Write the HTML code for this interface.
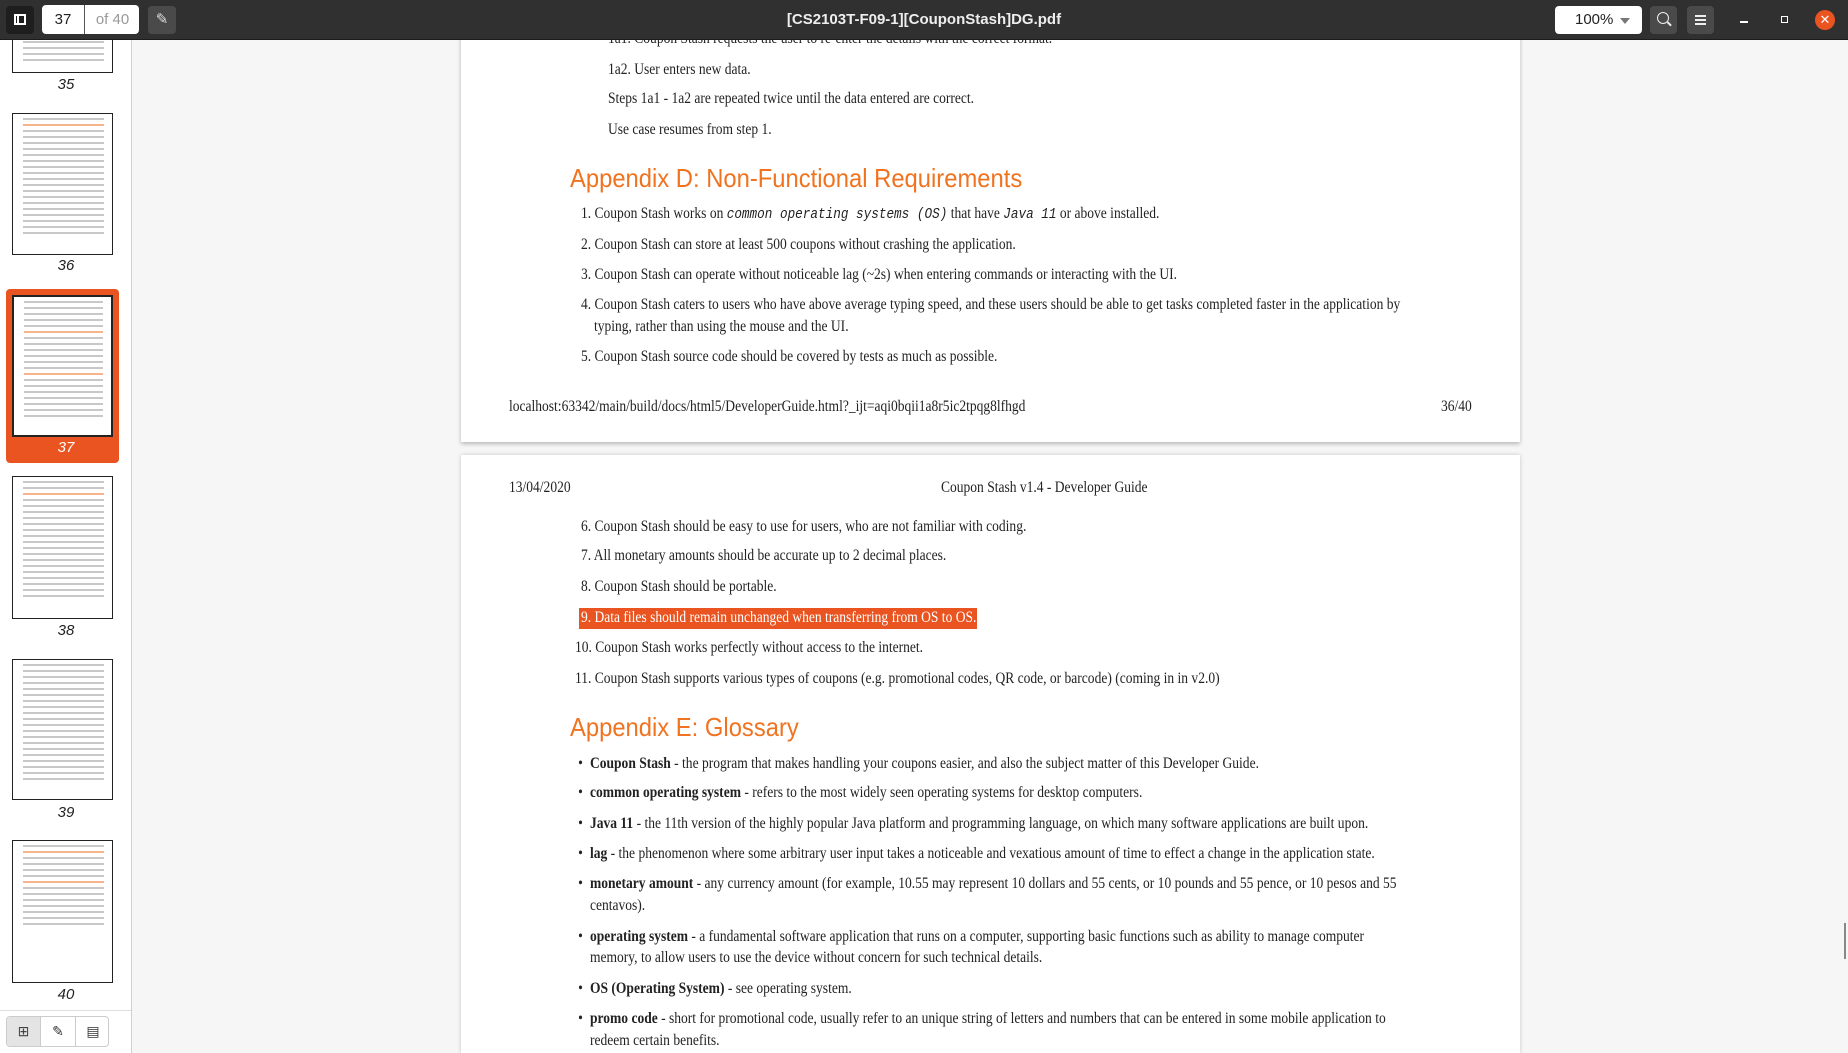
<!DOCTYPE html>
<html><head><meta charset="utf-8"><style>
*{margin:0;padding:0;box-sizing:border-box}
html{width:1848px;height:1053px;overflow:hidden}
body{width:1848px;height:1053px;overflow:hidden;background:#f6f6f6;font-family:"Liberation Sans",sans-serif;position:relative}
.top{position:absolute;left:0;top:0;width:1848px;height:40px;background:#303030;border-bottom:1px solid #1c1c1c;z-index:10}
.btn{position:absolute;top:6px;height:28px;background:#4a4a4a;border-radius:4px}
.side{position:absolute;left:0;top:40px;width:132px;height:1013px;background:#fff;border-right:1px solid #d0d0d0}
.th{position:absolute;left:12px;width:101px;border:1px solid #222;background:#fff;overflow:hidden}
.th i{display:block;height:2px;margin:4px 8px 0 10px;background:#c8c8c8}
.lab{position:absolute;width:132px;text-align:center;font-style:italic;font-size:15px;color:#222}
.page{position:absolute;left:461px;width:1059px;background:#fff;box-shadow:0 2px 4px rgba(0,0,0,.25);overflow:hidden}
.l{position:absolute;white-space:nowrap;font-family:"Liberation Serif",serif;font-size:16px;line-height:20px;color:#222;transform:scaleX(.845);transform-origin:0 50%}
.h{position:absolute;white-space:nowrap;font-family:"Liberation Sans",sans-serif;font-size:26px;line-height:30px;color:#f07320;transform:scaleX(.915);transform-origin:0 50%}
.m{font-family:"Liberation Mono",monospace;font-style:italic;font-size:15px}
.b::before{content:"•";position:absolute;left:-14px}
</style></head><body>
<div class="top">
 <div class="btn" style="left:6px;width:28px;background:#1e1e1e"><div style="position:absolute;left:8px;top:8px;width:12px;height:11px;border:2px solid #fff"><div style="position:absolute;left:1px;top:0;width:2px;height:7px;background:#fff"></div></div></div>
 <div style="position:absolute;left:42px;top:5px;width:97px;height:29px;background:#fff;border-radius:4px"></div>
 <div style="position:absolute;left:84px;top:5px;width:1px;height:29px;background:#555"></div>
 <div style="position:absolute;left:42px;top:11px;width:42px;text-align:center;font-size:15px;color:#222">37</div>
 <div style="position:absolute;left:86px;top:11px;width:53px;text-align:center;font-size:15px;color:#999">of 40</div>
 <div class="btn" style="left:148px;width:28px;color:#ddd;font-size:15px;text-align:center;line-height:28px">✎</div>
 <div style="position:absolute;left:0;width:1848px;top:11px;text-align:center;font-size:15px;font-weight:bold;color:#eee">[CS2103T-F09-1][CouponStash]DG.pdf</div>
 <div style="position:absolute;left:1555px;top:6px;width:87px;height:28px;background:#fff;border-radius:4px;font-size:15px;line-height:28px;padding-left:20px;color:#222">100%</div>
 <div style="position:absolute;left:1620px;top:18px;border-left:5px solid transparent;border-right:5px solid transparent;border-top:6px solid #777"></div>
 <div class="btn" style="left:1650px;width:27px"><div style="position:absolute;left:7px;top:6px;width:12px;height:12px;border:1.5px solid #eee;border-radius:50%"></div><div style="position:absolute;left:17px;top:17px;width:5px;height:1.5px;background:#eee;transform:rotate(45deg)"></div></div>
 <div class="btn" style="left:1687px;width:27px"><div style="position:absolute;left:8px;top:9px;width:11px;height:1.5px;background:#eee;box-shadow:0 4px #eee,0 8px #eee"></div></div>
 <div style="position:absolute;left:1740px;top:21px;width:8px;height:1.5px;background:#fff"></div>
 <div style="position:absolute;left:1781px;top:16px;width:7px;height:7px;border:1.5px solid #fff"></div>
 <div style="position:absolute;left:1815px;top:10px;width:20px;height:20px;border-radius:50%;background:#e95420;color:#fff;font-size:13px;text-align:center;line-height:20px">✕</div>
</div>

<div class="side">
 <div class="th" style="top:-10px;height:43px"><i></i><i></i><i></i><i></i><i></i></div>
 <div class="lab" style="top:36px">35</div>
 <div class="th" style="top:73px;height:142px"><i></i><i style="background:#f5b48c"></i><i></i><i></i><i></i><i></i><i></i><i></i><i></i><i></i><i></i><i></i><i></i><i></i><i></i><i></i><i></i><i></i><i></i><i></i></div>
 <div class="lab" style="top:217px">36</div>
 <div style="position:absolute;left:6px;top:249px;width:113px;height:174px;background:#e95420;border-radius:4px"></div>
 <div class="th" style="top:255px;height:142px;border-width:2px"><i></i><i></i><i></i><i></i><i></i><i style="background:#f5b48c"></i><i></i><i></i><i></i><i></i><i></i><i></i><i style="background:#f5b48c"></i><i></i><i></i><i></i><i></i><i></i><i></i><i></i></div>
 <div class="lab" style="top:399px;color:#fff">37</div>
 <div class="th" style="top:436px;height:143px"><i></i><i></i><i style="background:#f5b48c"></i><i></i><i></i><i></i><i></i><i></i><i></i><i></i><i></i><i></i><i></i><i></i><i></i><i></i><i></i><i></i><i></i><i></i></div>
 <div class="lab" style="top:582px">38</div>
 <div class="th" style="top:619px;height:141px"><i></i><i></i><i></i><i></i><i></i><i></i><i></i><i></i><i></i><i></i><i></i><i></i><i></i><i></i><i></i><i></i><i></i><i></i><i></i><i></i></div>
 <div class="lab" style="top:764px">39</div>
 <div class="th" style="top:800px;height:143px"><i></i><i style="background:#f5b48c"></i><i></i><i></i><i></i><i></i><i style="background:#f5b48c"></i><i></i><i></i><i></i><i></i><i></i><i></i><i></i></div>
 <div class="lab" style="top:946px">40</div>
 <div style="position:absolute;left:0;top:970px;width:131px;height:1px;background:#ddd"></div>
 <div style="position:absolute;left:6px;top:976px;width:103px;height:31px;border:1px solid #ccc;border-radius:4px;background:#fff;overflow:hidden">
  <div style="position:absolute;left:0;top:0;width:34px;height:31px;background:#e4e4e4;border-right:1px solid #ccc;font-size:14px;text-align:center;line-height:29px;color:#444">⊞</div>
  <div style="position:absolute;left:34px;top:0;width:35px;height:31px;border-right:1px solid #ccc;font-size:14px;text-align:center;line-height:29px;color:#333">✎</div>
  <div style="position:absolute;left:69px;top:0;width:34px;height:31px;font-size:14px;text-align:center;line-height:29px;color:#333">▤</div>
 </div>
</div>

<div class="page" style="top:0;height:442px">
 <div class="l" style="left:147px;top:29px">1a1. Coupon Stash requests the user to re-enter the details with the correct format.</div>
 <div class="l" style="left:147px;top:60px">1a2. User enters new data.</div>
 <div class="l" style="left:147px;top:89px">Steps 1a1 - 1a2 are repeated twice until the data entered are correct.</div>
 <div class="l" style="left:147px;top:120px">Use case resumes from step 1.</div>
 <div class="h" style="left:109px;top:163px">Appendix D: Non-Functional Requirements</div>
 <div class="l" style="left:120px;top:204px">1. Coupon Stash works on <span class="m">common operating systems (OS)</span> that have <span class="m">Java 11</span> or above installed.</div>
 <div class="l" style="left:120px;top:235px">2. Coupon Stash can store at least 500 coupons without crashing the application.</div>
 <div class="l" style="left:120px;top:265px">3. Coupon Stash can operate without noticeable lag (~2s) when entering commands or interacting with the UI.</div>
 <div class="l" style="left:120px;top:295px">4. Coupon Stash caters to users who have above average typing speed, and these users should be able to get tasks completed faster in the application by</div>
 <div class="l" style="left:133px;top:317px">typing, rather than using the mouse and the UI.</div>
 <div class="l" style="left:120px;top:347px">5. Coupon Stash source code should be covered by tests as much as possible.</div>
 <div class="l" style="left:48px;top:397px">localhost:63342/main/build/docs/html5/DeveloperGuide.html?_ijt=aqi0bqii1a8r5ic2tpqg8lfhgd</div>
 <div class="l" style="left:980px;top:397px">36/40</div>
</div>

<div class="page" style="top:455px;height:598px;box-shadow:0 0 4px rgba(0,0,0,.2)">
 <div class="l" style="left:48px;top:23px">13/04/2020</div>
 <div class="l" style="left:480px;top:23px">Coupon Stash v1.4 - Developer Guide</div>
 <div class="l" style="left:120px;top:62px">6. Coupon Stash should be easy to use for users, who are not familiar with coding.</div>
 <div class="l" style="left:120px;top:91px">7. All monetary amounts should be accurate up to 2 decimal places.</div>
 <div class="l" style="left:120px;top:122px">8. Coupon Stash should be portable.</div>
 <div style="position:absolute;left:118px;top:153px;width:398px;height:21px;background:#e95420"></div>
 <div class="l" style="left:120px;top:153px;color:#fff">9. Data files should remain unchanged when transferring from OS to OS.</div>
 <div class="l" style="left:114px;top:183px">10. Coupon Stash works perfectly without access to the internet.</div>
 <div class="l" style="left:114px;top:214px">11. Coupon Stash supports various types of coupons (e.g. promotional codes, QR code, or barcode) (coming in in v2.0)</div>
 <div class="h" style="left:109px;top:257px">Appendix E: Glossary</div>
 <div class="l b" style="left:129px;top:299px"><b>Coupon Stash</b> - the program that makes handling your coupons easier, and also the subject matter of this Developer Guide.</div>
 <div class="l b" style="left:129px;top:328px"><b>common operating system</b> - refers to the most widely seen operating systems for desktop computers.</div>
 <div class="l b" style="left:129px;top:359px"><b>Java 11</b> - the 11th version of the highly popular Java platform and programming language, on which many software applications are built upon.</div>
 <div class="l b" style="left:129px;top:389px"><b>lag</b> - the phenomenon where some arbitrary user input takes a noticeable and vexatious amount of time to effect a change in the application state.</div>
 <div class="l b" style="left:129px;top:419px"><b>monetary amount</b> - any currency amount (for example, 10.55 may represent 10 dollars and 55 cents, or 10 pounds and 55 pence, or 10 pesos and 55</div>
 <div class="l" style="left:129px;top:441px">centavos).</div>
 <div class="l b" style="left:129px;top:472px"><b>operating system</b> - a fundamental software application that runs on a computer, supporting basic functions such as ability to manage computer</div>
 <div class="l" style="left:129px;top:493px">memory, to allow users to use the device without concern for such technical details.</div>
 <div class="l b" style="left:129px;top:524px"><b>OS (Operating System)</b> - see operating system.</div>
 <div class="l b" style="left:129px;top:554px"><b>promo code</b> - short for promotional code, usually refer to an unique string of letters and numbers that can be entered in some mobile application to</div>
 <div class="l" style="left:129px;top:576px">redeem certain benefits.</div>
</div>
<div style="position:absolute;left:1844px;top:923px;width:2px;height:36px;background:#888"></div>
</body></html>
